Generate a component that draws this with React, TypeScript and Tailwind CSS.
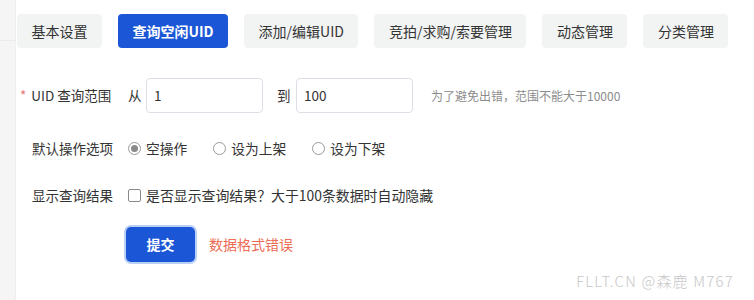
const tabs = ['基本设置', '查询空闲UID', '添加/编辑UID', '竞拍/求购/索要管理', '动态管理', '分类管理']

function Radio({ label, checked }: { label: string; checked?: boolean }) {
  return (
    <label className="flex items-center gap-[5px]">
      <span className="flex h-[13px] w-[13px] items-center justify-center rounded-full border border-[#9a9a9a] bg-white">
        {checked && <span className="h-[7px] w-[7px] rounded-full bg-[#8a8a8a]" />}
      </span>
      <span>{label}</span>
    </label>
  )
}

export default function App() {
  return (
    <div
      className="flex h-[300px] w-[754px] overflow-hidden bg-white text-[13.5px] text-[#333]"
      style={{ fontFamily: '"Noto Sans CJK SC", "Noto Sans", sans-serif' }}
    >
      <div className="w-4 shrink-0 border-r border-[#efefef] bg-[#f5f5f5]">
        <div className="mt-[40px] border-t border-[#ebebeb]" />
      </div>

      <div className="relative flex-1">
        <div className="flex gap-4 pl-px pt-[14px] text-[14px]">
          {tabs.map((t, i) => (
            <div
              key={t}
              className={
                i === 1
                  ? 'flex h-[34px] items-center rounded-[4px] bg-[#1a56d6] px-[14.5px] font-bold text-white'
                  : 'flex h-[34px] items-center rounded-[4px] bg-[#f2f3f3] px-[14.5px] text-[#333]'
              }
            >
              {t}
            </div>
          ))}
        </div>

        <div className="mt-[30px] flex h-[35px] items-center">
          <div className="flex w-[112px] items-center pl-[4px]">
            <span className="mr-[5px] text-[#e57373]">*</span>
            <span>UID 查询范围</span>
          </div>
          <span className="w-[18px]">从</span>
          <div className="flex h-[35px] w-[117px] items-center rounded-[4px] border border-[#dcdfe6] px-[7px]">1</div>
          <span className="ml-[14px] w-[19px]">到</span>
          <div className="flex h-[35px] w-[117px] items-center rounded-[4px] border border-[#dcdfe6] px-[7px]">100</div>
          <span className="ml-[18px] text-[12px] text-[#8c8c8c]">为了避免出错，范围不能大于10000</span>
        </div>

        <div className="mt-[18px] flex h-[35px] items-center">
          <div className="w-[112px] pl-[16px]">默认操作选项</div>
          <div className="flex items-center gap-[26px] text-[13.75px]">
            <Radio label="空操作" checked />
            <Radio label="设为上架" />
            <Radio label="设为下架" />
          </div>
        </div>

        <div className="mt-[12px] flex h-[35px] items-center">
          <div className="w-[112px] pl-[16px]">显示查询结果</div>
          <label className="flex items-center gap-[5px] text-[13.9px]">
            <span className="h-[13px] w-[13px] rounded-[2px] border border-[#8a8a8a] bg-white" />
            <span>是否显示查询结果？大于100条数据时自动隐藏</span>
          </label>
        </div>

        <div className="mt-[14px] flex items-center pl-[110px]">
          <button className="h-[35px] w-[69px] rounded-[5px] bg-[#1a56d6] text-[14px] font-bold text-white ring-2 ring-[#b9cff5]">
            提交
          </button>
          <span className="ml-[14px] text-[14px] text-[#ec6c55]">数据格式错误</span>
        </div>

        <div className="absolute bottom-[8px] right-[20px] text-[15px] font-light tracking-[1.2px] text-[#c8c8c8]">
          FLLT.CN @森鹿 M767
        </div>
      </div>
    </div>
  )
}
